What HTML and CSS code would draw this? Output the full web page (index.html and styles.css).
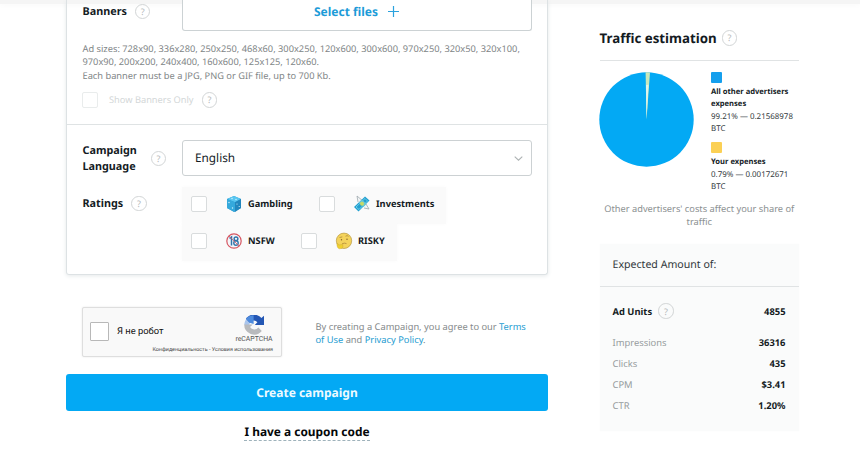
FILE: index.html
```html
<!DOCTYPE html>
<html lang="en">
<head>
<meta charset="utf-8">
<title>Create campaign</title>
<link rel="stylesheet" href="styles.css">
</head>
<body>
<div class="topbar"></div>
<div class="page">
  <main class="main">
    <section class="card">
      <div class="banners">
        <div class="upload-row">
          <div class="label">Banners <span class="help">?</span></div>
          <button class="upload"><span>Select files</span>
            <svg width="11" height="11" viewBox="0 0 11 11"><path d="M5.5 0v11M0 5.5h11" stroke="#2ba2de" stroke-width="1.2"/></svg>
          </button>
        </div>
        <p class="sizes">Ad sizes: 728x90, 336x280, 250x250, 468x60, 300x250, 120x600, 300x600, 970x250, 320x50, 320x100,<br>970x90, 200x200, 240x400, 160x600, 125x125, 120x60.<br>Each banner must be a JPG, PNG or GIF file, up to 700 Kb.</p>
        <div class="only"><span class="check faint"></span><span class="only-text">Show Banners Only</span><span class="help">?</span></div>
      </div>
      <div class="options">
        <div class="language">
          <div class="label two"><span>Campaign<br>Language</span><span class="help">?</span></div>
          <div class="select"><span>English</span>
            <svg width="9" height="5" viewBox="0 0 9 5"><path d="M.7.7l3.8 3.5L8.300.7" fill="none" stroke="#adb2b3" stroke-width="1.1"/></svg>
          </div>
        </div>
        <div class="ratings">
          <div class="label">Ratings <span class="help">?</span></div>
          <div class="tags">
            <div class="tag-row">
              <label class="tag gambling"><span class="check"></span>
                <svg width="18" height="18" viewBox="0 0 18 18"><path d="M9 1l7 3v9l-7 4-7-4V4z" fill="#2795ca"/><path d="M9 1l7 3-6 3.200L2 4z" fill="#58c6f1"/><path d="M2 4l8 3.200V17L2 13z" fill="#35a9dc"/><path d="M10 7.200L16 4v9l-6 4z" fill="#2286bd"/><g fill="#d4f5ff"><circle cx="7" cy="3.500" r=".7"/><circle cx="11" cy="4.500" r=".7"/><circle cx="4" cy="7.500" r=".7"/><circle cx="7.500" cy="13" r=".7"/><circle cx="12" cy="9" r=".6"/><circle cx="14.200" cy="11.500" r=".6"/></g></svg>
                <b>Gambling</b></label>
              <label class="tag invest"><span class="check"></span>
                <svg width="18" height="18" viewBox="0 0 18 18"><path d="M5 7L4 1l6 5M11 13l5 1-3-5" fill="#f3f6f7" stroke="#9ea8ad" stroke-width=".8"/><path d="M1 12L12 1.500l4.500 4L5.500 16.500z" fill="#229fd0"/><path d="M3 12l9-8.500L14.500 6 6 14.500z" fill="none" stroke="#7ad8ed" stroke-width=".8"/><path d="M6 7.500l3-3 4.500 4.500-3 3z" fill="#69c7d4"/><circle cx="9" cy="8.700" r="2" fill="#c9da66"/></svg>
                <b>Investments</b></label>
            </div>
            <div class="tag-row">
              <label class="tag nsfw"><span class="check"></span>
                <svg width="18" height="18" viewBox="0 0 18 18"><circle cx="9" cy="9" r="7.200" fill="#f4f6fa" stroke="#d65661" stroke-width="1.200"/><path d="M4.500 6.300l2-1.300v8.500" fill="none" stroke="#2f74aa" stroke-width="1.500"/><ellipse cx="11" cy="6.800" rx="1.900" ry="1.800" fill="none" stroke="#2f74aa" stroke-width="1.400"/><ellipse cx="11" cy="11" rx="2.200" ry="2.200" fill="none" stroke="#2f74aa" stroke-width="1.400"/><path d="M4 4l10 10" stroke="#d65661" stroke-width=".8"/></svg>
                <b>NSFW</b></label>
              <label class="tag risky"><span class="check"></span>
                <svg width="18" height="18" viewBox="0 0 18 18"><circle cx="9" cy="8.800" r="7.700" fill="#f4d35b" stroke="#b79a43" stroke-width=".7"/><path d="M4.500 5.500l2.800-.6M10.500 4.200q1.700-1.200 3 .2M7 11.800q2.500-1.200 4.500-.2" fill="none" stroke="#a57c35" stroke-width=".7"/><circle cx="6.500" cy="7.800" r=".7" fill="#84602a"/><circle cx="12" cy="7.300" r=".7" fill="#84602a"/><path d="M2 11.500q1.200-.5 1.700 1.500l4-.6q1.300.8-.5 1.400l1 .8q-.6 2.400-3.700 2.200Q1.800 16.300 2 11.500z" fill="#efd02f" stroke="#c9a52e" stroke-width=".4"/></svg>
                <b>RISKY</b></label>
            </div>
          </div>
        </div>
      </div>
    </section>
    <div class="agreement">
      <div class="captcha">
        <div class="captcha-main">
          <span class="captcha-box"></span><span class="captcha-text">Я не робот</span>
          <div class="captcha-brand">
            <svg width="20" height="20" viewBox="0 0 20 20"><path d="M.3 10A10 10 0 0 1 3.500 2.800L7 6.500Q5.500 7.700 5.300 10z" fill="#a9c5ec"/><path d="M2 3.500A10 10 0 0 1 17.400 3L20 .8V10h-9.200l2.600-2.800A5 5 0 0 0 8 5.800L5.500 7.500z" fill="#2457b4"/><path d="M9.600.3A10 10 0 0 0 2 4l3.600 3.700L9.600 9z" fill="#4e8bdd"/><path d="M.2 9.500h8.500L6 12.100a5 5 0 0 0 8.400.3L17.800 16A10 10 0 0 1 .2 9.500z" fill="#b8babd"/></svg>
            <span>reCAPTCHA</span>
          </div>
        </div>
        <div class="captcha-links">Конфиденциальность - Условия использования</div>
      </div>
      <p class="terms">By creating a Campaign, you agree to our <a>Terms<br>of Use</a> and <a>Privacy Policy</a>.</p>
    </div>
    <button class="create">Create campaign</button>
    <div class="coupon"><a>I have a coupon code</a></div>
  </main>
  <aside class="side">
    <h2><span>Traffic estimation</span><span class="help">?</span></h2>
    <div class="chart">
      <svg class="pie" width="95" height="95" viewBox="0 0 95 95"><circle cx="47.500" cy="47.500" r="47.200" fill="#03a9f4"/><path d="M47.500 47.500L46.600.3Q49 .1 51 .4z" fill="#c9e8ba"/><path d="M47.500 47.500L47 13l2.500-.2z" fill="#e0f5ee"/></svg>
      <div class="legend">
        <i class="swatch blue"></i>
        <b>All other advertisers<br>expenses</b>
        <p>99.21% — 0.21568978<br>BTC</p>
        <i class="swatch yellow"></i>
        <b>Your expenses</b>
        <p>0.79% — 0.00172671<br>BTC</p>
      </div>
    </div>
    <p class="note">Other advertisers' costs affect your share of<br>traffic</p>
    <section class="expected">
      <h3>Expected Amount of:</h3>
      <div class="stats">
        <div class="stat units"><span><b>Ad Units</b><span class="help">?</span></span><b>4855</b></div>
        <div class="stat"><span>Impressions</span><b>36316</b></div>
        <div class="stat"><span>Clicks</span><b>435</b></div>
        <div class="stat"><span>CPM</span><b>$3.41</b></div>
        <div class="stat"><span>CTR</span><b>1.20%</b></div>
      </div>
    </section>
  </aside>
</div>
</body>
</html>
```
FILE: styles.css
```css
* { box-sizing: border-box; }
body {
  margin: 0; width: 860px; height: 454px; overflow: hidden; position: relative;
  background: #fff; color: #141b1f; font-family: "Noto Sans", sans-serif; font-size: 10px;
  text-rendering: geometricPrecision;
}
p, h2, h3 { margin: 0; font-weight: 400; }
button { font-family: inherit; margin: 0; padding: 0; text-rendering: inherit; }
svg { display: block; flex: none; }
.topbar { position: absolute; top: 0; left: 0; width: 100%; height: 4px; background: #f5f5f5; box-shadow: 0 0 6px #f5f5f5; }
.page { position: relative; display: flex; padding-left: 66px; gap: 51.500px; }
.main { width: 482px; flex: none; }
.card { height: 275px; border: 1px solid #dde2e4; border-top: 0; border-radius: 0 0 3px 3px; box-shadow: 0 1px 4px #e5e9ea; }
.banners { height: 124.500px; border-bottom: 1px solid #dfe3e4; padding: 0 15px; }
.upload-row, .language, .ratings { display: flex; }
.label { width: 99.500px; flex: none; display: flex; align-items: center; gap: 11px; padding-left: .5px; font-size: 10.800px; font-weight: 700; white-space: nowrap; }
.upload-row .label { height: 23px; }
.upload-row .help { margin-left: -3px; }
.help {
  width: 15.500px; height: 15.500px; flex: none; border: 1px solid #d2d5d6; border-radius: 50%;
  display: inline-flex; align-items: center; justify-content: center; font-size: 9px; font-weight: 400; line-height: 1; color: #b4b8ba;
}
.upload {
  width: 350px; height: 31px; background: #fff; border: 1px solid #ccd2d4; border-top: 0; border-radius: 0 0 3px 3px;
  display: flex; justify-content: center; align-items: center; gap: 10px; padding-bottom: 8px; color: #1c9bd8; font-size: 12px; font-weight: 700;
}
.sizes { margin-top: 11px; padding-left: .5px; font-size: 9.280px; line-height: 13.300px; color: #818687; white-space: nowrap; }
.only { display: flex; align-items: center; height: 16px; margin-top: 10px; color: #d3d7d8; }
.only-text { margin: 0 8px 0 11px; white-space: nowrap; font-size: 9.280px; }
.check { width: 16px; height: 16px; flex: none; border: 1px solid #d9dcdd; border-radius: 2px; background: #fff; }
.check.faint { border-color: #e9ecec; }
.options { padding: 15.500px 15px 0; }
.label.two { line-height: 15.800px; height: 37px; gap: 14px; }
.select {
  width: 350px; height: 36px; border: 1px solid #ccd1d3; border-radius: 3px; padding: 0 8px 0 12.500px;
  display: flex; align-items: center; justify-content: space-between; font-size: 11.800px;
}
.ratings { margin-top: 9.500px; }
.ratings .label { height: 34px; gap: 8px; }
.tag-row { display: flex; width: max-content; height: 37px; background: #fafafa; padding: 9px 12px 0 9px; box-shadow: 0 0 4px #fafafa; }
.tag { display: flex; height: 16px; align-items: center; font-size: 9.280px; }
.tag svg { margin: 0 5.500px 0 18px; }
.tag b { white-space: nowrap; }
.gambling { width: 128px; }
.nsfw { width: 110px; }
.agreement { display: flex; height: 50px; margin-top: 32px; padding-left: 16px; }
.captcha { width: 200px; height: 50px; border: 1px solid #dedede; border-radius: 2px; background: #f9f9f9; box-shadow: 0 0 2px #e5e5e5; font-family: Roboto, sans-serif; }
.captcha-main { display: flex; height: 39px; padding-left: 7px; }
.captcha-box { width: 19px; height: 19px; margin-top: 14px; border: 1px solid #b8b8b8; border-radius: 1px; background: #fff; }
.captcha-text { margin: 17px 0 0 8px; width: 119px; font-size: 9.400px; line-height: 14px; color: #111; }
.captcha-brand { width: 36px; display: flex; flex-direction: column; align-items: center; padding-top: 7px; font-size: 6.900px; line-height: 8px; color: #555; }
.captcha-text, .captcha-brand { flex: none; }
.captcha-links { text-align: right; padding-right: 8px; font-size: 5.350px; line-height: 6px; color: #444; white-space: nowrap; }
.terms { margin: 13px 0 0 33.500px; font-size: 9.300px; line-height: 13.300px; color: #858a8b; white-space: nowrap; }
.terms a { color: #249cd1; }
.create { display: block; width: 482px; height: 37px; margin-top: 17px; border: 0; border-radius: 3px; background: #03a9f4; color: #edfaff; font-size: 12px; font-weight: 700; }
.coupon { text-align: center; margin-top: 13px; font-size: 11.900px; line-height: 16px; font-weight: 700; color: #050809; }
.coupon a { display: inline-block; height: 17px; border-bottom: 1px dashed #9eb2bb; }
.side { width: 199.500px; padding-top: 28px; }
.side h2 { display: flex; align-items: center; gap: 5px; height: 32.500px; padding-bottom: 12px; border-bottom: 1px solid #e0e3e4; font-size: 13.300px; font-weight: 700; white-space: nowrap; }
.chart { display: flex; height: 130px; margin-top: 11.500px; gap: 17px; }
.pie { margin-left: -.5px; }
.legend { font-size: 7.950px; line-height: 12px; white-space: nowrap; }
.legend b { display: block; margin-top: 3px; font-size: 7.600px; }
.legend p { margin-top: 1px; color: #333a3d; }
.swatch { display: block; width: 11px; height: 10.500px; border-radius: 1px; }
.blue { background: #159fed; }
.yellow { background: #fbd055; margin-top: 7.500px; }
.note { text-align: center; font-size: 9.280px; line-height: 13.300px; color: #8b9091; white-space: nowrap; }
.expected { margin-top: 15.500px; height: 187px; background: #fafbfb; box-shadow: 0 0 2px #fafbfb; }
.expected h3 { height: 42.500px; padding: 0 13px; border-bottom: 1px solid #e0e3e4; font-size: 10.600px; line-height: 43px; color: #30373a; }
.stats { padding: 14px 13.500px 0 13px; }
.stat { display: flex; height: 21.200px; justify-content: space-between; align-items: center; font-size: 9.400px; color: #969b9d; }
.stat > span { display: flex; align-items: center; gap: 6px; }
.stat b { color: #141b1f; }
.units { margin-bottom: 10px; }
```
